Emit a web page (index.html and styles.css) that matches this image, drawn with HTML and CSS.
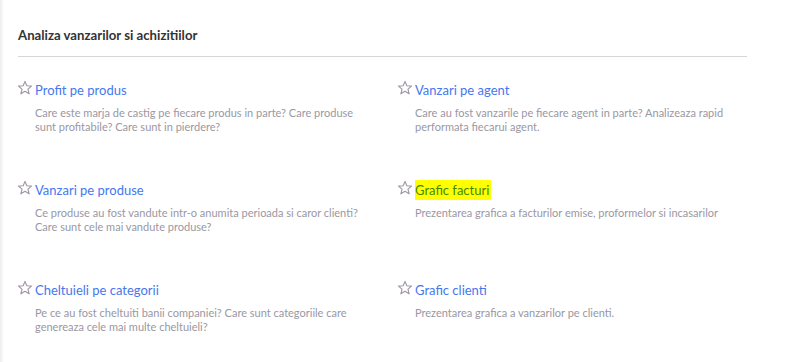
FILE: index.html
```html
<!DOCTYPE html>
<html lang="ro">

<head>
    <meta charset="UTF-8">
    <meta name="viewport" content="width=device-width, initial-scale=1.0">
    <title>Rapoarte</title>
    <link rel="stylesheet" href="styles.css">
</head>

<body>
    <main class="reports">
        <h2 class="reports-title">Analiza vanzarilor si achizitiilor</h2>

        <div class="report-grid">
            <div class="report">
                <svg class="star" viewBox="0 0 14 14"><path d="M7 1.2 L8.6 5 L12.7 5.3 L9.6 8 L10.6 12.1 L7 9.9 L3.4 12.1 L4.4 8 L1.3 5.3 L5.4 5 Z"/></svg>
                <div class="report-body">
                    <a href="#" class="report-link">Profit pe produs</a>
                    <p>Care este marja de castig pe fiecare produs in parte? Care produse sunt profitabile? Care sunt in pierdere?</p>
                </div>
            </div>
            <div class="report">
                <svg class="star" viewBox="0 0 14 14"><path d="M7 1.2 L8.6 5 L12.7 5.3 L9.6 8 L10.6 12.1 L7 9.9 L3.4 12.1 L4.4 8 L1.3 5.3 L5.4 5 Z"/></svg>
                <div class="report-body">
                    <a href="#" class="report-link">Vanzari pe agent</a>
                    <p>Care au fost vanzarile pe fiecare agent in parte? Analizeaza rapid performata fiecarui agent.</p>
                </div>
            </div>
            <div class="report">
                <svg class="star" viewBox="0 0 14 14"><path d="M7 1.2 L8.6 5 L12.7 5.3 L9.6 8 L10.6 12.1 L7 9.9 L3.4 12.1 L4.4 8 L1.3 5.3 L5.4 5 Z"/></svg>
                <div class="report-body">
                    <a href="#" class="report-link">Vanzari pe produse</a>
                    <p>Ce produse au fost vandute intr-o anumita perioada si caror clienti? Care sunt cele mai vandute produse?</p>
                </div>
            </div>
            <div class="report">
                <svg class="star" viewBox="0 0 14 14"><path d="M7 1.2 L8.6 5 L12.7 5.3 L9.6 8 L10.6 12.1 L7 9.9 L3.4 12.1 L4.4 8 L1.3 5.3 L5.4 5 Z"/></svg>
                <div class="report-body">
                    <a href="#" class="report-link highlight">Grafic facturi </a>
                    <p>Prezentarea grafica a facturilor emise, proformelor si incasarilor</p>
                </div>
            </div>
            <div class="report">
                <svg class="star" viewBox="0 0 14 14"><path d="M7 1.2 L8.6 5 L12.7 5.3 L9.6 8 L10.6 12.1 L7 9.9 L3.4 12.1 L4.4 8 L1.3 5.3 L5.4 5 Z"/></svg>
                <div class="report-body">
                    <a href="#" class="report-link">Cheltuieli pe categorii</a>
                    <p>Pe ce au fost cheltuiti banii companiei? Care sunt categoriile care genereaza cele mai multe cheltuieli?</p>
                </div>
            </div>
            <div class="report">
                <svg class="star" viewBox="0 0 14 14"><path d="M7 1.2 L8.6 5 L12.7 5.3 L9.6 8 L10.6 12.1 L7 9.9 L3.4 12.1 L4.4 8 L1.3 5.3 L5.4 5 Z"/></svg>
                <div class="report-body">
                    <a href="#" class="report-link">Grafic clienti</a>
                    <p>Prezentarea grafica a vanzarilor pe clienti.</p>
                </div>
            </div>
        </div>
    </main>
</body>

</html>
```

FILE: styles.css
```css
body {
    font-family: Lato, "Open Sans", sans-serif;
    margin: 0;
    padding: 0;
    background-color: #fff;
    background-image: linear-gradient(to right, #ececec, #fff 4px);
    height: 362px;
    overflow: hidden;
}

.reports {
    padding: 26px 0 0 17px;
    width: 730px;
}

.reports-title {
    margin: 0 0 0 1px;
    font-size: 13.2px;
    font-weight: 700;
    color: #333;
    line-height: 18px;
    padding-bottom: 12px;
    border-bottom: 1px solid #d6d6d6;
}

.report-grid {
    display: grid;
    grid-template-columns: 380px 350px;
    grid-auto-rows: 100px;
    padding-top: 22px;
}

.report {
    display: flex;
    align-items: flex-start;
}

.star {
    width: 16px;
    height: 16px;
    margin-top: 1px;
    margin-right: 2px;
    flex-shrink: 0;
}

.star path {
    fill: none;
    stroke: #a096a6;
    stroke-width: 1;
    stroke-linejoin: round;
}

.report-body {
    width: 330px;
}

.report-link {
    display: inline-block;
    font-size: 13px;
    line-height: 18px;
    color: #4677ee;
    text-decoration: none;
}

.report-link.highlight {
    background-color: #ffff00;
    color: #3f8a00;
    padding: 1px 2px 1px 0;
    margin: -1px 0;
}

.report-body p {
    margin: 7px 0 0;
    font-size: 11px;
    line-height: 14px;
    color: #9a97a3;
}
```
